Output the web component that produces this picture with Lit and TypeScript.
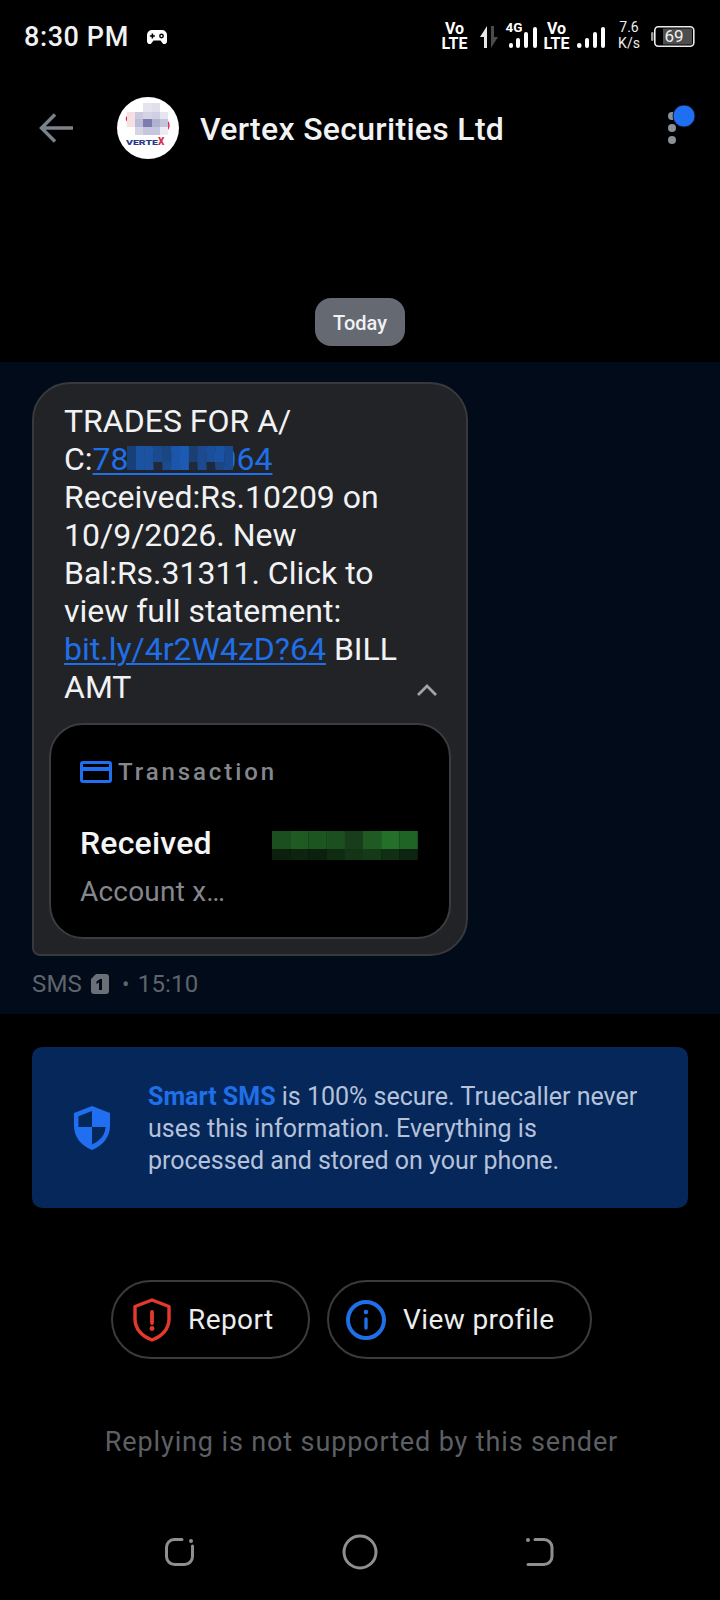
import { LitElement, css, html, svg } from "lit";
import { customElement } from "lit/decorators.js";

// pixelated redactions: [x, y, w, h, colour]
const AVATAR: [number, number, number, number, string][] = [
  [26, 6, 9, 9, "#e4e3ee"],
  [35, 6, 8, 9, "#e0e0ec"],
  [10, 15, 8, 15, "#f5dfe3"],
  [18, 15, 8, 7, "#c9c9e0"],
  [26, 15, 9, 7, "#d4d4e6"],
  [35, 15, 8, 7, "#cfcfe2"],
  [43, 15, 8, 7, "#e6e6f0"],
  [18, 22, 8, 8, "#bcbcd8"],
  [26, 22, 9, 8, "#7d7cb0"],
  [35, 22, 8, 8, "#b2b2d0"],
  [43, 22, 8, 8, "#c3c3da"],
  [18, 30, 8, 8, "#d5d5e6"],
  [26, 30, 9, 8, "#c6c6de"],
  [35, 30, 8, 8, "#c6c6de"],
  [43, 30, 8, 8, "#ececf4"],
];
const ACCOUNT_TOP = ["#173f78", "#1c52a2", "#1c52a2", "#1b4a90", "#1a4684", "#1c56aa", "#1d5ab2", "#1b3f72", "#1b4a90", "#1c4f9a", "#1c52a2", "#1a4a92"];
const ACCOUNT_BOTTOM = ["#173f78", "#1c52a2", "#1c52a2", "#222a3a", "#1b4a90", "#1c56aa", "#1d5ab2", "#22293a", "#1b4a90", "#20293c", "#1a4684", "#1a4a92"];
const GREEN_TOP = ["#1c4f1f", "#1e5a22", "#1d5520", "#1c4f1f", "#173d1a", "#1f5a23", "#24702a", "#1f6325"];
const GREEN_BOTTOM = ["#0c200d", "#0d240f", "#0c210d", "#0f2c11", "#133516", "#143a17", "#112f13", "#0d2510"];

@customElement("app-root")
export class AppRoot extends LitElement {
  static styles = css`
    :host {
      display: block;
      width: 720px;
      height: 1600px;
      background: #000;
      color: #f1f2f3;
      font-family: Roboto, "Liberation Sans", sans-serif;
      overflow: hidden;
    }
    .page {
      display: flex;
      flex-direction: column;
      height: 1600px;
    }

    .status {
      display: flex;
      align-items: center;
      justify-content: space-between;
      height: 74px;
      padding: 0 24px;
      box-sizing: border-box;
    }
    .status-left {
      display: flex;
      align-items: center;
      gap: 17px;
      font-size: 27px;
      font-weight: 500;
      letter-spacing: 0.6px;
    }
    .status-icons {
      display: block;
    }

    .appbar {
      display: flex;
      align-items: center;
      height: 106px;
      padding: 2px 22px 0 38px;
      box-sizing: border-box;
    }
    .back {
      width: 36px;
      height: 36px;
      margin-right: 43px;
    }
    .avatar {
      width: 62px;
      height: 62px;
      margin-right: 21px;
      display: block;
    }
    .title {
      flex: 1;
      font-size: 32px;
      font-weight: 500;
      letter-spacing: 0.3px;
      padding-top: 2px;
    }
    .more {
      width: 40px;
      height: 44px;
      display: block;
      margin-top: -2px;
    }

    .date-row {
      display: flex;
      justify-content: center;
      padding-top: 118px;
      height: 182px;
      box-sizing: border-box;
    }
    .today {
      display: flex;
      align-items: center;
      justify-content: center;
      width: 90px;
      height: 48px;
      padding-top: 1px;
      box-sizing: border-box;
      border-radius: 16px;
      background: #646972;
      font-size: 20px;
      font-weight: 500;
    }

    .thread {
      background: #020b19;
      height: 652px;
      box-sizing: border-box;
      padding: 20px 0 0 32px;
    }
    .bubble {
      box-sizing: border-box;
      width: 436px;
      height: 574px;
      background: #222327;
      border: 2px solid #37393d;
      border-radius: 38px 38px 38px 8px;
      padding: 0 15px;
      position: relative;
    }
    .body {
      margin: 0;
      padding: 18px 0 0 15px;
      width: 364px;
      font-size: 32px;
      line-height: 38px;
      height: 339px;
      box-sizing: border-box;
      color: #f1f2f3;
    }
    .link {
      color: #1f6fe8;
      white-space: nowrap;
      text-decoration: underline;
      text-decoration-thickness: 2px;
      text-underline-offset: 3px;
    }
    .account {
      position: relative;
    }
    .masked {
      position: absolute;
      left: 34px;
      top: 6px;
      width: 106px;
      height: 24px;
    }
    .chevron {
      position: absolute;
      right: 27px;
      top: 298px;
      width: 24px;
      height: 16px;
    }
    .card {
      box-sizing: border-box;
      height: 216px;
      background: #000;
      border: 2px solid #3a3c40;
      border-radius: 34px;
      padding: 36px 31px 0 29px;
    }
    .card-head {
      display: flex;
      align-items: center;
      gap: 6px;
      height: 22px;
      color: #84878d;
      font-size: 24px;
      font-weight: 500;
      letter-spacing: 2.9px;
    }
    .card-row {
      display: flex;
      align-items: center;
      justify-content: space-between;
      margin-top: 40px;
      height: 40px;
      font-size: 32px;
      font-weight: 500;
      letter-spacing: 0.2px;
      color: #f4f5f6;
    }
    .redacted {
      margin-top: 5px;
    }
    .card-sub {
      margin-top: 12px;
      font-size: 28px;
      color: #84878d;
      letter-spacing: 0.2px;
    }
    .meta {
      display: flex;
      align-items: center;
      gap: 8px;
      height: 28px;
      margin-top: 14px;
      font-size: 24px;
      letter-spacing: 0.2px;
      color: #5f646c;
    }
    .meta .dot {
      font-size: 22px;
      margin-left: 4px;
    }

    .banner {
      display: flex;
      align-items: center;
      box-sizing: border-box;
      height: 161px;
      margin: 33px 32px 0;
      padding: 0 40px 0 42px;
      background: #06275a;
      border-radius: 10px;
    }
    .banner svg {
      flex: none;
      margin-right: 38px;
    }
    .banner p {
      margin: 0;
      padding-top: 3px;
      font-size: 25px;
      line-height: 32px;
      color: #b5c2da;
    }
    .banner b {
      color: #1f6fe8;
      font-weight: 700;
    }

    .actions {
      display: flex;
      gap: 17px;
      margin-top: 72px;
      padding-left: 111px;
    }
    .action {
      display: flex;
      align-items: center;
      box-sizing: border-box;
      height: 79px;
      border: 2px solid #3a3b3d;
      border-radius: 40px;
      font-size: 28px;
      color: #eceded;
      letter-spacing: 0.4px;
    }
    .action.report {
      width: 199px;
      padding-left: 20px;
      gap: 17px;
    }
    .action.profile {
      width: 265px;
      padding-left: 17px;
      gap: 17px;
    }

    .notice {
      margin-top: 63px;
      padding-left: 3px;
      text-align: center;
      font-size: 27px;
      line-height: 40px;
      letter-spacing: 0.87px;
      color: #5c5f64;
    }

    .nav {
      display: flex;
      align-items: center;
      justify-content: center;
      gap: 145px;
      margin-top: 72px;
    }
  `;

  renderStatusIcons() {
    return html`<svg class="status-icons" width="256" height="40" viewBox="0 0 256 40">
      <g fill="#fff" font-family="Roboto, sans-serif" font-weight="700" text-anchor="middle">
        <text x="14.500" y="17" font-size="16">Vo</text>
        <text x="14.500" y="32" font-size="16">LTE</text>
        <text x="74" y="15" font-size="13.500">4G</text>
        <text x="116.500" y="17" font-size="16">Vo</text>
        <text x="116.500" y="32" font-size="16">LTE</text>
      </g>
      <path d="M47 31V9l-7 11h4v11z" fill="#e6e6e6" />
      <path d="M51 9v22l7-11h-4V9z" fill="#4a4a4a" />
      <g fill="#fff">
        <rect x="69" y="26" width="4" height="5" rx="2" />
        <rect x="76" y="21" width="4" height="10" rx="2" />
        <rect x="84" y="15" width="4" height="16" rx="2" />
        <rect x="93" y="10" width="4" height="21" rx="2" />
        <rect x="137" y="26" width="4.500" height="5" rx="2.200" />
        <rect x="145" y="21" width="4" height="10" rx="2" />
        <rect x="153" y="15" width="4" height="16" rx="2" />
        <rect x="161" y="10" width="4" height="21" rx="2" />
      </g>
      <g fill="#eee" font-family="Roboto, sans-serif" text-anchor="middle">
        <text x="189" y="15" font-size="14">7.6</text>
        <text x="189" y="31" font-size="14">K/s</text>
      </g>
      <rect x="211" y="15" width="2.500" height="9" rx="1.200" fill="#9a9a9a" />
      <rect x="214.800" y="9.800" width="39" height="19.500" rx="3.500" fill="none" stroke="#ececec" stroke-width="1.600" />
      <rect x="223" y="11.500" width="29" height="16" fill="#4d4d4d" />
      <text x="234" y="25" fill="#f0f0f0" font-family="Roboto, sans-serif" font-size="17" text-anchor="middle">69</text>
    </svg>`;
  }

  render() {
    return html`<div class="page">
      <div class="status">
        <div class="status-left">
          <span>8:30 PM</span>
          <svg width="22" height="16" viewBox="0 0 22 16">
            <path fill="#fff" fill-rule="evenodd"
              d="M6 1h10a5 5 0 0 1 5 5v6.500a2.500 2.500 0 0 1-4.600 1.400L14.500 11.500h-7L5.600 13.900A2.500 2.500 0 0 1 1 12.500V6a5 5 0 0 1 5-5zM5.600 4.500v1.700H3.900v1.600h1.700v1.700h1.600V7.800h1.700V6.200H7.200V4.500zM15.500 4.600a2.400 2.400 0 1 0 0 4.800 2.400 2.400 0 0 0 0-4.800zm0 1.400a1 1 0 1 1 0 2 1 1 0 0 1 0-2z" />
          </svg>
        </div>
        ${this.renderStatusIcons()}
      </div>

      <div class="appbar">
        <svg class="back" viewBox="0 0 36 36" fill="none" stroke="#7b828b" stroke-width="3.400">
          <path d="M35 18H4M17 4.500 3.500 18 17 31.500" />
        </svg>
        <svg class="avatar" viewBox="0 0 62 62">
          <circle cx="31" cy="31" r="31" fill="#fff" />
          <path d="M49 24c4 1 4 8-1 10" fill="none" stroke="#d6324f" stroke-width="1.500" />
          <path d="M11 19c-2 1-2 3-1 5" fill="none" stroke="#d6324f" stroke-width="1.200" />
          ${AVATAR.map(([x, y, w, h, c]) => svg`<rect x=${x} y=${y} width=${w} height=${h} fill=${c} />`)}
          <text x="9" y="47.500" font-family="Roboto, sans-serif" font-size="8" font-weight="900" fill="#2d3a8c" textLength="32" lengthAdjust="spacingAndGlyphs">VERTE</text>
          <text x="41" y="48" font-family="Roboto, sans-serif" font-size="10" font-weight="900" fill="#d6324f">X</text>
        </svg>
        <div class="title">Vertex Securities Ltd</div>
        <svg class="more" viewBox="0 0 40 44">
          <circle cx="14" cy="11" r="4" fill="#8b9097" />
          <circle cx="14" cy="23" r="4" fill="#8b9097" />
          <circle cx="14" cy="35" r="4" fill="#8b9097" />
          <circle cx="26" cy="11" r="11" fill="#1f6ff0" stroke="#0a1a3a" stroke-width="1" />
        </svg>
      </div>

      <div class="date-row"><div class="today">Today</div></div>

      <div class="thread">
        <div class="bubble">
          <p class="body">TRADES FOR A/ C:<span class="link account">7800000064<svg class="masked" viewBox="0 0 106 24">
            ${ACCOUNT_TOP.map((c, i) => svg`<rect x=${i * 8.840} y="0" width="9" height="16" fill=${c} />`)}
            ${ACCOUNT_BOTTOM.map((c, i) => svg`<rect x=${i * 8.840} y="16" width="9" height="8" fill=${c} />`)}
          </svg></span> Received:Rs.10209 on 10/9/2026. New Bal:Rs.31311. Click to view full statement: <span class="link">bit.ly/4r2W4zD?64</span> BILL AMT</p>
          <svg class="chevron" viewBox="0 0 24 16" fill="none" stroke="#a0a3a8" stroke-width="2.800">
            <path d="M3 13 12 4l9 9" />
          </svg>
          <div class="card">
            <div class="card-head">
              <svg width="32" height="22" viewBox="0 0 32 22">
                <path fill="#1f6ff0" fill-rule="evenodd"
                  d="M3 0h26a3 3 0 0 1 3 3v16a3 3 0 0 1-3 3H3a3 3 0 0 1-3-3V3a3 3 0 0 1 3-3zm0 3v3h26V3zm0 7v9h26v-9z" />
              </svg>
              <span>Transaction</span>
            </div>
            <div class="card-row">
              <span>Received</span>
              <svg class="redacted" width="146" height="29" viewBox="0 0 146 29">
                ${GREEN_TOP.map((c, i) => svg`<rect x=${i * 18.200} y="0" width="18.400" height="18" fill=${c} />`)}
                ${GREEN_BOTTOM.map((c, i) => svg`<rect x=${i * 18.200} y="18" width="18.400" height="11" fill=${c} />`)}
              </svg>
            </div>
            <div class="card-sub">Account x…</div>
          </div>
        </div>
        <div class="meta">
          <span>SMS</span>
          <svg width="20" height="22" viewBox="0 0 20 22">
            <path fill="#6b7078" fill-rule="evenodd"
              d="M6 1h10a3 3 0 0 1 3 3v14a3 3 0 0 1-3 3H4a3 3 0 0 1-3-3V6zM10 6 6.500 8.500V11L9 9.500V17h3V6z" />
          </svg>
          <span class="dot">•</span>
          <span>15:10</span>
        </div>
      </div>

      <div class="banner">
        <svg width="36" height="44" viewBox="0 0 36 44">
          <path fill="#1f6ff0" fill-rule="evenodd"
            d="M18 0 36 7v13c0 11-7.500 20-18 24C7.500 40 0 31 0 20V7zM18 5 4.500 10.200V21H18zM18 21v17.500C25.500 35 31.500 29 31.500 21z" />
        </svg>
        <p><b>Smart SMS</b> is 100% secure. Truecaller never uses this information. Everything is processed and stored on your phone.</p>
      </div>

      <div class="actions">
        <div class="action report">
          <svg width="38" height="44" viewBox="0 0 38 44" fill="none">
            <path d="M19 2 36 8.500V21c0 10-7 17.500-17 21C9 38.500 2 31 2 21V8.500z" stroke="#e5392d" stroke-width="3.400" stroke-linejoin="round" />
            <path d="M19 14v11" stroke="#e5392d" stroke-width="3.800" stroke-linecap="round" />
            <circle cx="19" cy="30.500" r="2.400" fill="#e5392d" />
          </svg>
          <span>Report</span>
        </div>
        <div class="action profile">
          <svg width="40" height="40" viewBox="0 0 40 40" fill="none">
            <circle cx="20" cy="20" r="18" stroke="#1f6fe8" stroke-width="4" />
            <circle cx="20" cy="12" r="2.300" fill="#1f6fe8" />
            <path d="M20 19v9" stroke="#1f6fe8" stroke-width="3.400" stroke-linecap="round" />
          </svg>
          <span>View profile</span>
        </div>
      </div>

      <div class="notice">Replying is not supported by this sender</div>

      <div class="nav">
        <svg width="34" height="32" viewBox="0 0 34 32" fill="none" stroke="#8f8f8f" stroke-width="3">
          <path d="M19 3.500h-8a8 8 0 0 0-7.500 8v9a8 8 0 0 0 8 8h10a8 8 0 0 0 8-8V10" stroke-linecap="round" />
          <circle cx="28" cy="5" r="2" fill="#8f8f8f" stroke="none" />
        </svg>
        <svg width="36" height="36" viewBox="0 0 36 36" fill="none" stroke="#8f8f8f" stroke-width="3">
          <circle cx="18" cy="18" r="16" />
        </svg>
        <svg width="34" height="32" viewBox="0 0 34 32" fill="none" stroke="#8f8f8f" stroke-width="3">
          <path d="M12 3.500h9a8 8 0 0 1 8 8v9a8 8 0 0 1-8 8H5" stroke-linecap="round" />
          <circle cx="5" cy="4" r="2" fill="#8f8f8f" stroke="none" />
        </svg>
      </div>
    </div>`;
  }
}

declare global {
  interface HTMLElementTagNameMap {
    "app-root": AppRoot;
  }
}
